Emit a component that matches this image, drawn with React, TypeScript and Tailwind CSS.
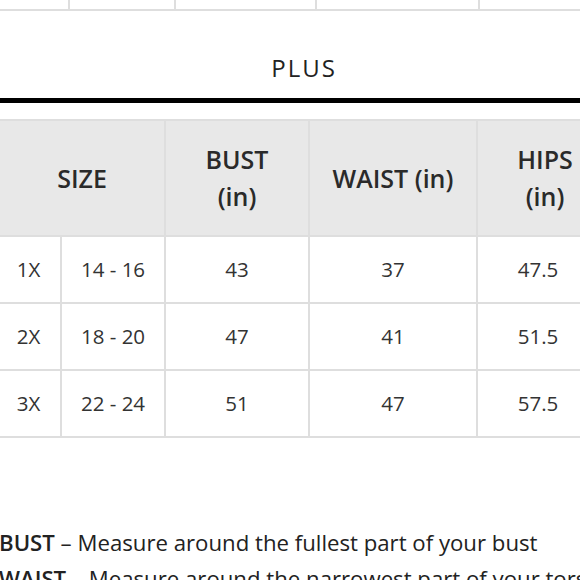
export default function App() {
  const rows = [
    ["1X", "14 - 16", "43", "37", "47.5"],
    ["2X", "18 - 20", "47", "41", "51.5"],
    ["3X", "22 - 24", "51", "47", "57.5"],
  ];

  return (
    <div
      className="h-[580px] w-[580px] overflow-hidden bg-white text-[#2b2b2b]"
      style={{ fontFamily: '"Open Sans", sans-serif' }}
    >
      {/* tail of the previous table */}
      <div className="flex h-[11px] w-[640px] border-b-2 border-[#dedede]">
        <div className="w-[70px] border-r-2 border-[#dedede]" />
        <div className="w-[106px] border-r-2 border-[#dedede]" />
        <div className="w-[141px] border-r-2 border-[#dedede]" />
        <div className="w-[163px] border-r-2 border-[#dedede]" />
      </div>

      <div className="flex h-[87px] items-center justify-center pt-[26px] pl-[28px] text-[24px] tracking-[2px] text-[#222]">
        PLUS
      </div>
      <div className="h-[5px] bg-black" />

      <table className="mt-[16px] -ml-[2px] w-[640px] table-fixed border-collapse text-center">
        <colgroup>
          <col className="w-[62px]" />
          <col className="w-[104px]" />
          <col className="w-[144px]" />
          <col className="w-[168px]" />
          <col className="w-[162px]" />
        </colgroup>
        <thead>
          <tr className="h-[116px] bg-[#e8e8e8] text-[25px] leading-[37px] text-[#2a2a2a]">
            <th colSpan={2} className="border-2 border-[#dedede] font-semibold">SIZE</th>
            <th className="border-2 border-[#dedede] font-semibold">
              BUST
              <br />
              (in)
            </th>
            <th className="border-2 border-[#dedede] font-semibold">WAIST (in)</th>
            <th className="border-2 border-[#dedede] pr-[26px] font-semibold">
              HIPS
              <br />
              (in)
            </th>
          </tr>
        </thead>
        <tbody className="text-[20.5px] text-[#333]">
          {rows.map((r) => (
            <tr key={r[0]} className="h-[67px]">
              <td className="border-2 border-[#dedede] pr-[3px]">{r[0]}</td>
              <td className="border-2 border-[#dedede]">{r[1]}</td>
              <td className="border-2 border-[#dedede]">{r[2]}</td>
              <td className="border-2 border-[#dedede]">{r[3]}</td>
              <td className="border-2 border-[#dedede] pr-[40px]">{r[4]}</td>
            </tr>
          ))}
        </tbody>
      </table>

      <div className="mt-[87px] -ml-[1px] whitespace-nowrap text-[22.2px] leading-[36px] text-[#222]">
        <p>
          <span className="font-semibold">BUST</span> – Measure around the fullest part of your bust
        </p>
        <p>
          <span className="font-semibold">WAIST</span> – Measure around the narrowest part of your torso
        </p>
      </div>
    </div>
  );
}
